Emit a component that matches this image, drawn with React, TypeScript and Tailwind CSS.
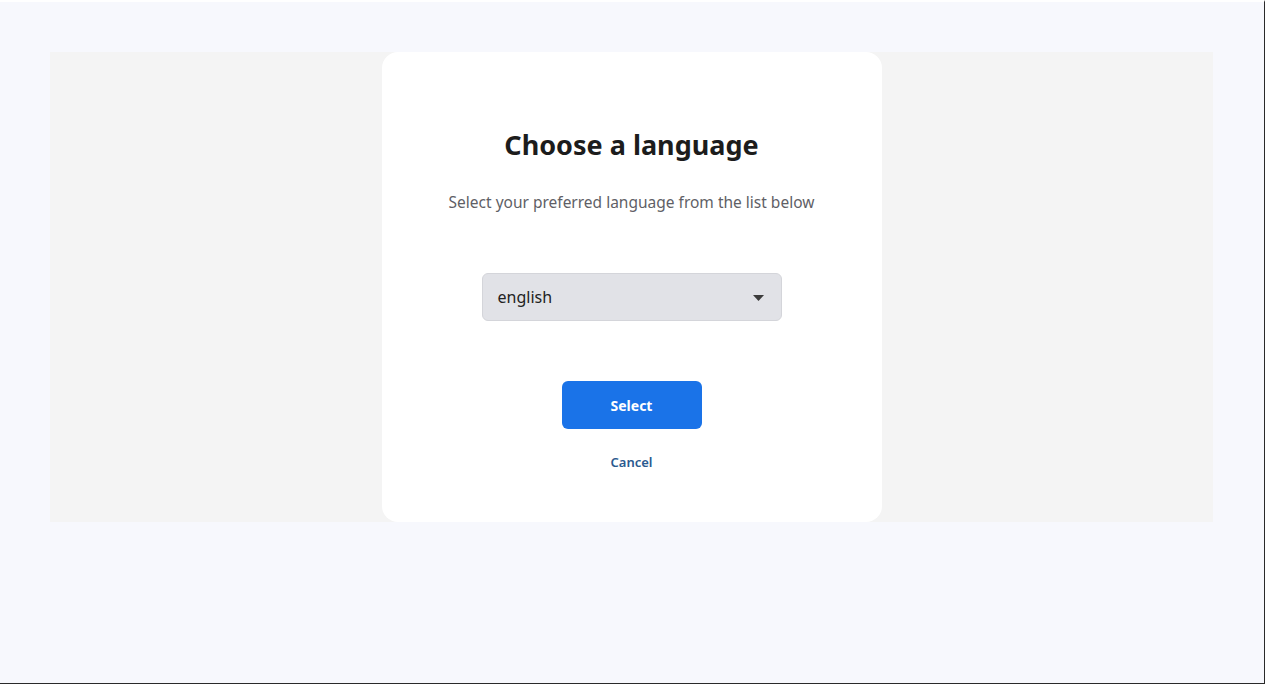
import type { JSX } from 'react'

export default function App(): JSX.Element {
  return (
    <div className="h-[684px] w-[1265px] overflow-hidden border-t-2 border-r border-b border-t-white border-r-[#2a2a2a] border-b-[#2a2a2a] bg-[#f7f8fd] font-['Noto_Sans','Open_Sans',sans-serif]">
      <div className="mx-[50px] mt-[50px] flex h-[470px] w-[1163px] justify-center bg-[#f4f4f4]">
        <div className="flex w-[500px] flex-col items-center rounded-2xl bg-white pt-[77px]">
          <h1 className="text-[27px] font-bold leading-[32px] text-[#1c1c1c]">Choose a language</h1>
          <p className="mt-[30px] text-[15.5px] leading-[22px] text-[#5f5f66]">
            Select your preferred language from the list below
          </p>

          {/* language picker */}
          <div className="mt-[60px] flex h-[48px] w-[300px] items-center justify-between rounded-md border border-[#d4d5da] bg-[#e1e2e7] pr-[17px] pl-[15px]">
            <span className="text-[16px] text-[#222]">english</span>
            <svg width="11" height="6" viewBox="0 0 11 6" className="mt-px">
              <path d="M0 0h11L5.5 6z" fill="#3c3c3c" />
            </svg>
          </div>

          <button className="mt-[60px] h-[48px] w-[140px] rounded-md bg-[#1a73e8] text-[14px] font-bold text-white">
            Select
          </button>
          <button className="mt-[23px] text-[13px] leading-[20px] font-semibold text-[#2b5a8f]">Cancel</button>
        </div>
      </div>
    </div>
  )
}
